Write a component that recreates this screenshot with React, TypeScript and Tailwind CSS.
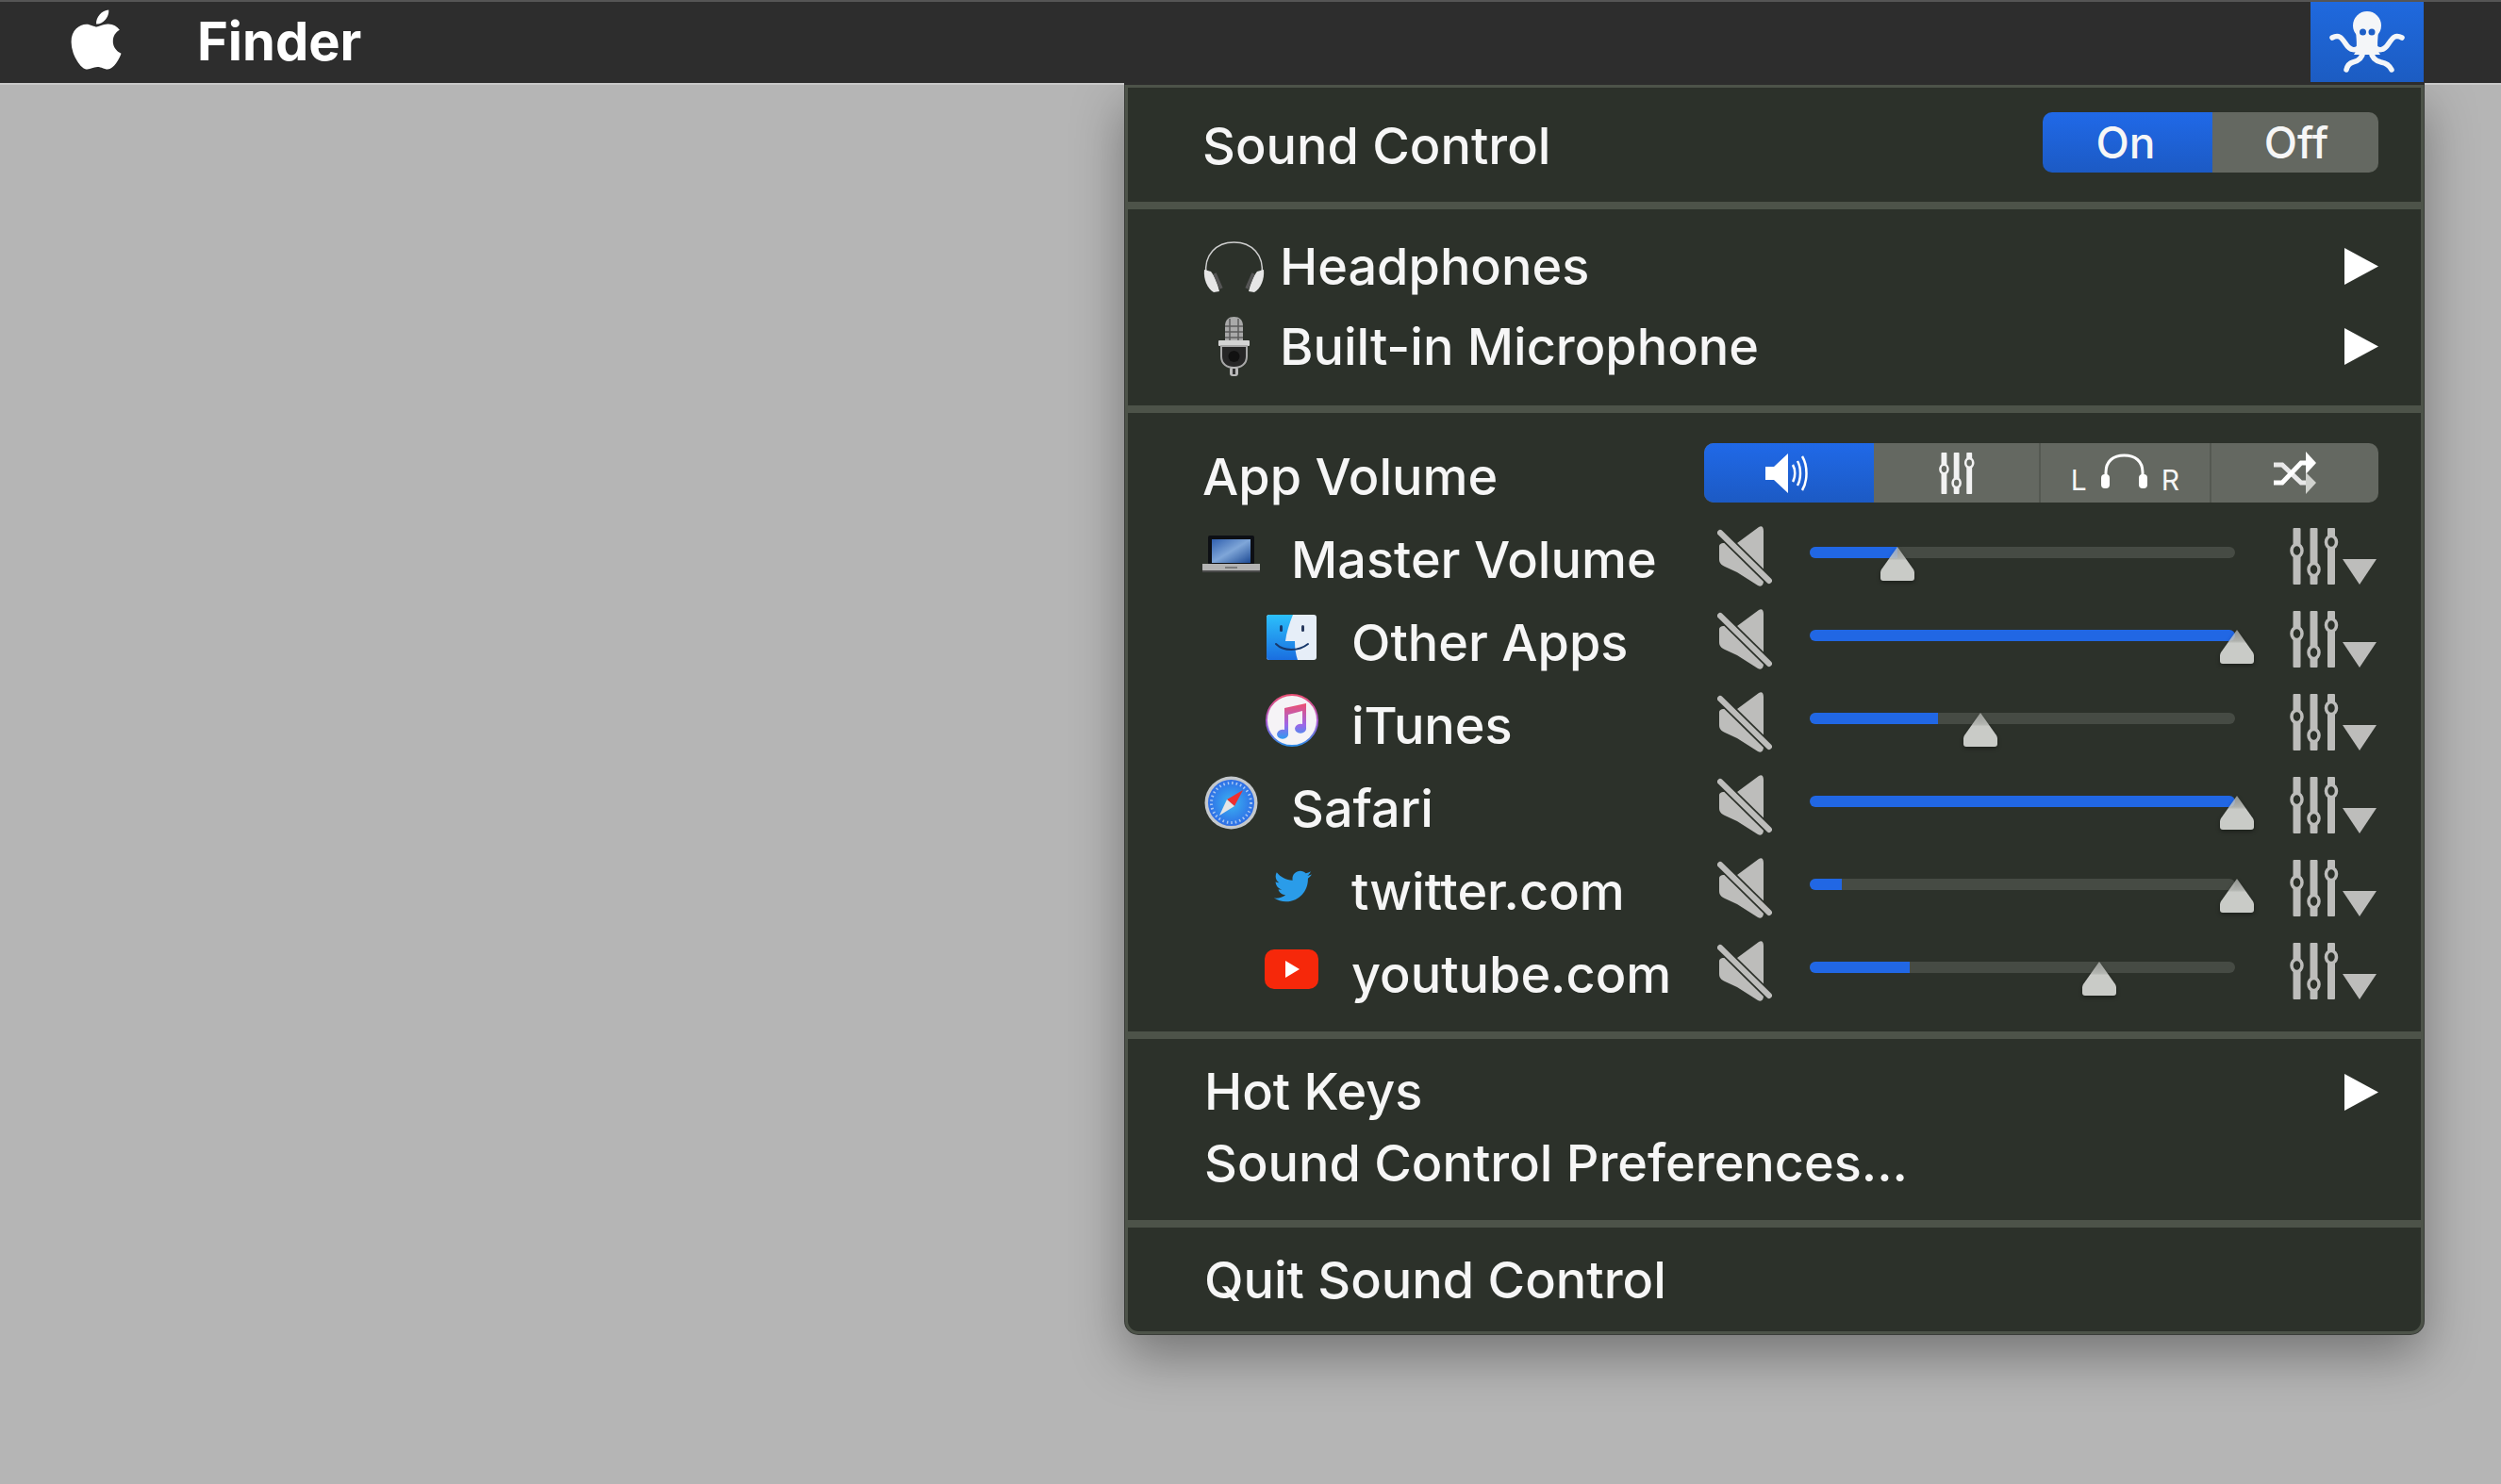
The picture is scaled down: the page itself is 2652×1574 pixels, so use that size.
import React from 'react';
import { FaApple, FaTwitter } from 'react-icons/fa';

const font = "font-['Inter','Liberation_Sans',sans-serif]";

const Octopus = () => (
  <svg width="80" height="66" viewBox="0 0 80 66" fill="none">
    <ellipse cx="40" cy="15" rx="15" ry="15" fill="#f4f6f8" />
    <path d="M28 20 C29 34 30 40 26 46 L54 46 C50 40 51 34 52 20 Z" fill="#f4f6f8" />
    <circle cx="35.500" cy="22" r="3.500" fill="#1d5fc8" />
    <circle cx="45" cy="22" r="3.500" fill="#1d5fc8" />
    <g stroke="#f4f6f8" strokeLinecap="round" strokeWidth="5.500">
      <path d="M3 28 C10 24 13 28 17 34 C22 42 28 43 34 36" />
      <path d="M77 28 C70 24 67 28 63 34 C58 42 52 43 46 36" />
      <path d="M36 42 C35 50 30 53 25 54 C21 55 19 58 18 62" />
      <path d="M44 42 C45 50 50 53 55 54 C61 55 64 58 66 62" />
    </g>
  </svg>
);

const Headphones = () => (
  <svg width="65" height="54" viewBox="0 0 65 54" fill="none">
    <path d="M3 36 C0 14 14 1 32.500 1 C51 1 65 14 62 36" stroke="#cfcfcf" strokeWidth="1.500" />
    <path d="M1 30 C0 40 4 50 11 54 L17 53 C15 45 12 37 8 32 Z" fill="#e6e6e6" />
    <path d="M64 30 C65 40 61 50 54 54 L48 53 C50 45 53 37 57 32 Z" fill="#e6e6e6" />
    <path d="M12 34 L19 50" stroke="#555" strokeWidth="3.500" />
    <path d="M53 34 L46 50" stroke="#555" strokeWidth="3.500" />
  </svg>
);

const Mic = () => (
  <svg width="33" height="63" viewBox="0 0 33 63" fill="none">
    <path d="M7 10 C7 3 11 0 16.500 0 C22 0 26 3 26 10 L26 26 L7 26 Z" fill="#a9a9a9" />
    <path d="M7 10 H26 M7 16 H26 M7 22 H26 M12 2 V26 M21 2 V26" stroke="#5c5c5c" strokeWidth="1.500" />
    <rect x="0" y="25" width="33" height="6" rx="1" fill="#d4d4d4" />
    <path d="M3 31 H30 V42 C30 50 24 54 16.500 54 C9 54 3 50 3 42 Z" fill="#262626" stroke="#a8a8a8" strokeWidth="2" />
    <circle cx="16.500" cy="42" r="6" fill="#111" />
    <rect x="12" y="53" width="9" height="10" rx="3" fill="#b8b8b8" />
    <rect x="15" y="55" width="3" height="6" fill="#333" />
  </svg>
);

const Laptop = () => (
  <svg width="61" height="39" viewBox="0 0 61 39">
    <defs>
      <linearGradient id="laptopScreen" x1="0" y1="0" x2="1" y2="1">
        <stop offset="0" stopColor="#2f5fae" />
        <stop offset="0.5" stopColor="#7fa6d8" />
        <stop offset="1" stopColor="#1d4a94" />
      </linearGradient>
    </defs>
    <rect x="6" y="0" width="49" height="31" rx="2" fill="#0d0f14" />
    <rect x="10" y="4" width="41" height="25" fill="url(#laptopScreen)" />
    <path d="M0 30 H61 V36 C61 38 60 39 58 39 H3 C1 39 0 38 0 36 Z" fill="#b3b3b3" />
    <rect x="0" y="37" width="61" height="2" fill="#4a4a4a" />
    <rect x="24" y="33" width="13" height="2" fill="#7c7c7c" />
  </svg>
);

const Finder = () => (
  <svg width="53" height="48" viewBox="0 0 53 48">
    <defs>
      <linearGradient id="finderBlue" x1="0" y1="0" x2="0" y2="1">
        <stop offset="0" stopColor="#2cc0fb" />
        <stop offset="1" stopColor="#1a6ee0" />
      </linearGradient>
    </defs>
    <rect width="53" height="48" rx="3" fill="#e6eef8" />
    <path d="M3 0 H28 C24 10 21 19 20 28 H30 C30 36 31 42 33 48 H3 C1 48 0 47 0 45 V3 C0 1 1 0 3 0 Z" fill="url(#finderBlue)" />
    <rect x="14" y="11" width="3" height="7" rx="1.500" fill="#17386b" />
    <rect x="37" y="11" width="3" height="7" rx="1.500" fill="#27385c" />
    <path d="M10 31 C18 39 34 39 44 31" fill="none" stroke="#17386b" strokeWidth="2" strokeLinecap="round" />
  </svg>
);

const ITunes = () => (
  <svg width="56" height="56" viewBox="0 0 56 56">
    <defs>
      <linearGradient id="tunesRing" x1="0" y1="0" x2="0" y2="1">
        <stop offset="0" stopColor="#e84e72" />
        <stop offset="0.55" stopColor="#a65cd8" />
        <stop offset="1" stopColor="#2f8ee8" />
      </linearGradient>
      <linearGradient id="tunesNote" x1="0" y1="0" x2="0" y2="1">
        <stop offset="0" stopColor="#ee4f6e" />
        <stop offset="0.6" stopColor="#9d66e8" />
        <stop offset="1" stopColor="#2f9bf0" />
      </linearGradient>
    </defs>
    <circle cx="28" cy="28" r="27" fill="#f5f3f6" stroke="url(#tunesRing)" strokeWidth="2" />
    <path d="M20 15 L43 10 V36 A6 5 0 1 1 39 32 V18 L24 22 V42 A6 5 0 1 1 20 38 Z" fill="url(#tunesNote)" />
  </svg>
);

const Safari = () => (
  <svg width="57" height="57" viewBox="0 0 57 57">
    <defs>
      <radialGradient id="safariFace">
        <stop offset="0" stopColor="#3bb4f2" />
        <stop offset="1" stopColor="#2e6ee6" />
      </radialGradient>
    </defs>
    <circle cx="28.500" cy="28.500" r="28" fill="#c4c8cc" />
    <circle cx="28.500" cy="28.500" r="24.500" fill="url(#safariFace)" />
    <circle cx="28.500" cy="28.500" r="21" fill="none" stroke="#a9c8f4" strokeWidth="3" strokeDasharray="1.500 3" />
    <path d="M41 15 L24 25 L32 32 Z" fill="#ef2f2f" />
    <path d="M16 42 L24 25 L32 32 Z" fill="#e6e6e6" />
  </svg>
);

const Youtube = () => (
  <svg width="57" height="42" viewBox="0 0 57 42">
    <rect width="57" height="42" rx="10" fill="#f6280a" />
    <path d="M22 12 L37 21 L22 30 Z" fill="#fff" />
  </svg>
);

const Arrow = () => (
  <svg width="36" height="39" viewBox="0 0 36 39">
    <path d="M0 0 L36 19.500 L0 39 Z" fill="#fff" />
  </svg>
);

const Muted = () => (
  <svg width="58" height="64" viewBox="0 0 58 64" className="shrink-0">
    <path d="M44 1 C47 -1 49 1 49 5 V58 C49 62 47 65 43 63 L21 49 L8 43 C4 41 2 39 2 35 V22 C2 19 4 18 7 18 H21 Z" fill="#bdbdbb" />
    <path d="M2 6 L57 60" stroke="#2c312a" strokeWidth="9.500" />
    <path d="M3 7 L55 58" stroke="#bdbdbb" strokeWidth="6" strokeLinecap="round" />
  </svg>
);

const Sliders = ({ width, height, hole, color }: { width: number; height: number; hole: string; color: string }) => (
  <svg width={width} height={height} viewBox="0 0 52 60" className="shrink-0">
    <rect x="3.500" y="0" width="8" height="60" rx="1" fill={color} />
    <rect x="21.500" y="0" width="8" height="60" rx="1" fill={color} />
    <rect x="40" y="0" width="8" height="60" rx="1" fill={color} />
    <ellipse cx="7.500" cy="24" rx="5.500" ry="6.500" fill={hole} stroke={color} strokeWidth="3.500" />
    <ellipse cx="25.500" cy="44" rx="5.500" ry="6.500" fill={hole} stroke={color} strokeWidth="3.500" />
    <ellipse cx="44" cy="15" rx="5.500" ry="6.500" fill={hole} stroke={color} strokeWidth="3.500" />
  </svg>
);

const Thumb = () => (
  <svg width="36" height="37" viewBox="0 0 36 37">
    <defs>
      <linearGradient id="thumbFill" x1="0" y1="0" x2="0" y2="1">
        <stop offset="0" stopColor="#c9cbc7" stopOpacity="0.65" />
        <stop offset="0.33" stopColor="#c9cbc7" stopOpacity="0.85" />
        <stop offset="0.4" stopColor="#c9cbc7" />
      </linearGradient>
    </defs>
    <path d="M18 0 L35 24 C36 26 36 27 36 29 V33 C36 35 35 36 33 36 H3 C1 36 0 35 0 33 V29 C0 27 0 26 1 24 Z" fill="url(#thumbFill)" />
  </svg>
);

const Slider = ({ fill, thumb }: { fill: number; thumb: number }) => (
  <div className="relative w-[451px] h-[64px] shrink-0">
    <div className="absolute left-0 right-0 top-[22px] h-[12px] rounded-full bg-[#464b44] overflow-hidden">
      <div className="h-full bg-[#2167e4]" style={{ width: fill }} />
    </div>
    <div className="absolute top-[22px] -translate-x-1/2 drop-shadow-[0_2px_2px_rgba(0,0,0,0.35)]" style={{ left: thumb }}>
      <Thumb />
    </div>
  </div>
);

const rows = [
  { label: 'Master Volume', icon: <Laptop />, nested: false, fill: 93, thumb: 93, pad: 'pl-0' },
  { label: 'Other Apps', icon: <Finder />, nested: true, fill: 451, thumb: 453, pad: 'pl-[4px]' },
  { label: 'iTunes', icon: <ITunes />, nested: true, fill: 136, thumb: 181, pad: 'pl-[3px]' },
  { label: 'Safari', icon: <Safari />, nested: false, fill: 451, thumb: 453, pad: 'pl-[2px]' },
  { label: 'twitter.com', icon: <FaTwitter className="w-[46px] h-[40px] text-[#2a9ce9]" />, nested: true, fill: 34, thumb: 453, pad: 'pl-[9px]' },
  { label: 'youtube.com', icon: <Youtube />, nested: true, fill: 106, thumb: 307, pad: 'pl-[2px]' },
];

const MenuRow = ({ children, arrow }: { children: React.ReactNode; arrow?: boolean }) => (
  <div className="flex items-center justify-between">
    <div className="flex items-center">{children}</div>
    {arrow && <Arrow />}
  </div>
);

const Separator = () => <div className="h-[8px] bg-[#4d5349]" />;

export default function App() {
  return (
    <div className={`relative w-[2652px] h-[1574px] overflow-hidden bg-[#b5b5b5] text-white ${font}`}>
      <header className="relative z-20 h-[90px] flex border-t-2 border-t-[#555555] border-b-2 border-b-[#c9c9c9] bg-[#2d2d2d]">
        <FaApple className="ml-[70px] mt-[4px] w-[64px] h-[72px]" />
        <span className="ml-[75px] text-[56px] leading-[84px] font-bold">Finder</span>
        <div className="ml-auto mr-[82px] w-[120px] h-[85px] flex items-center justify-center bg-gradient-to-b from-[#1f69de] to-[#1c5cc2]">
          <Octopus />
        </div>
        <div className="absolute left-[1192px] w-[1379px] -bottom-[2px] h-[2px] bg-[#2d2d2d]" />
      </header>

      <div className="absolute z-10 left-[1193px] top-[90px] w-[1377px] h-[1325px] rounded-b-[14px] border-[3px] border-[#4d5349] bg-[#2c312a] shadow-[0_0_0_1px_#3a3d39,0_22px_55px_rgba(0,0,0,0.36)] text-[54px] font-[450] leading-none text-[#f6f6f6]">
        <section className="h-[121px] pl-[79px] pr-[45px] flex items-center justify-between">
          <span className="pt-[2px]">Sound Control</span>
          <div className="flex h-[64px] w-[356px] mb-[6px] rounded-[10px] overflow-hidden text-[46px] leading-[60px]">
            <div className="w-[180px] pr-[4px] flex items-center justify-center bg-gradient-to-b from-[#2069e8] to-[#1c5ac4]">On</div>
            <div className="flex-1 pl-[2px] flex items-center justify-center bg-[#646861]">Off</div>
          </div>
        </section>
        <Separator />
        <section className="h-[208px] pl-[80px] pr-[45px] pt-[18px]">
          <div className="h-[85px] flex flex-col justify-center">
            <MenuRow arrow>
              <div className="w-[81px]"><Headphones /></div>
              <span>Headphones</span>
            </MenuRow>
          </div>
          <div className="h-[85px] flex flex-col justify-center">
            <MenuRow arrow>
              <div className="w-[81px] pl-[16px]"><Mic /></div>
              <span>Built-in Microphone</span>
            </MenuRow>
          </div>
        </section>
        <Separator />
        <section className="h-[656px] pl-[79px] pr-[45px] pt-[32px]">
          <div className="h-[63px] mb-[13px] flex items-center justify-between">
            <span className="pt-[8px]">App Volume</span>
            <div className="flex w-[715px] h-[63px] rounded-[10px] overflow-hidden bg-[#646861]">
              <div className="w-[180px] pr-[4px] flex items-center justify-center bg-gradient-to-b from-[#2069e8] to-[#1c5ac4]">
                <svg width="48" height="44" viewBox="0 0 46 44" fill="none">
                  <path d="M0 15 H9 L24 1 V43 L9 29 H0 Z" fill="#fff" />
                  <path d="M29 13 C32 18 32 26 29 31 M34 9 C38 16 38 28 34 35 M39 4 C45 14 45 30 39 40" stroke="#fff" strokeWidth="2.500" />
                </svg>
              </div>
              <div className="w-[177px] border-r-2 border-[#555952] flex items-center justify-center">
                <Sliders width={40} height={44} hole="#646861" color="#f2f2f2" />
              </div>
              <div className="w-[181px] border-r-2 border-[#555952] flex items-center justify-center gap-[13px] text-[30px] font-normal pt-[4px]">
                <span className="pt-[10px]">L</span>
                <svg width="53" height="38" viewBox="0 0 51 38" fill="none" className="-mt-[8px]">
                  <path d="M6 24 V20 C6 8 14 2 25.500 2 C37 2 45 8 45 20 V24" stroke="#fff" strokeWidth="3" />
                  <rect x="1" y="22" width="9" height="15" rx="4" fill="#fff" />
                  <rect x="41" y="22" width="9" height="15" rx="4" fill="#fff" />
                </svg>
                <span className="pt-[10px]">R</span>
              </div>
              <div className="flex-1 flex items-center justify-center">
                <svg width="47" height="45" viewBox="0 0 47 45" fill="none">
                  <path d="M1 14 H10 L30 33 H38" stroke="#e8e8e8" strokeWidth="5" />
                  <path d="M1 33 H10 L30 12 H38" stroke="#fff" strokeWidth="5" />
                  <path d="M35 0 L46 12 L35 24 Z" fill="#fff" />
                  <path d="M35 22 L46 33 L35 45 Z" fill="#d0d2ce" />
                </svg>
              </div>
            </div>
          </div>
          {rows.map((row) => (
            <div key={row.label} className="h-[88px] flex items-center">
              <div className={`w-[546px] shrink-0 flex items-center ${row.nested ? 'pl-[64px]' : ''}`}>
                <div className={`w-[94px] -mt-[5px] ${row.pad}`}>{row.icon}</div>
                <span className="pt-[8px] whitespace-nowrap">{row.label}</span>
              </div>
              <Muted />
              <div className="w-[40px] shrink-0" />
              <Slider fill={row.fill} thumb={row.thumb} />
              <div className="w-[58px] shrink-0" />
              <Sliders width={52} height={60} hole="#2c312a" color="#bdbdbb" />
              <svg width="36" height="27" viewBox="0 0 36 27" className="ml-[4px] mt-[32px] shrink-0">
                <path d="M0 0 H36 L18 27 Z" fill="#bdbdbb" />
              </svg>
            </div>
          ))}
        </section>
        <Separator />
        <section className="h-[192px] pl-[81px] pr-[45px] pt-[29px] flex flex-col gap-[22px]">
          <MenuRow arrow><span>Hot Keys</span></MenuRow>
          <MenuRow><span>Sound Control Preferences...</span></MenuRow>
        </section>
        <Separator />
        <section className="h-[110px] pl-[81px] pt-[29px]">
          <span>Quit Sound Control</span>
        </section>
      </div>
    </div>
  );
}
